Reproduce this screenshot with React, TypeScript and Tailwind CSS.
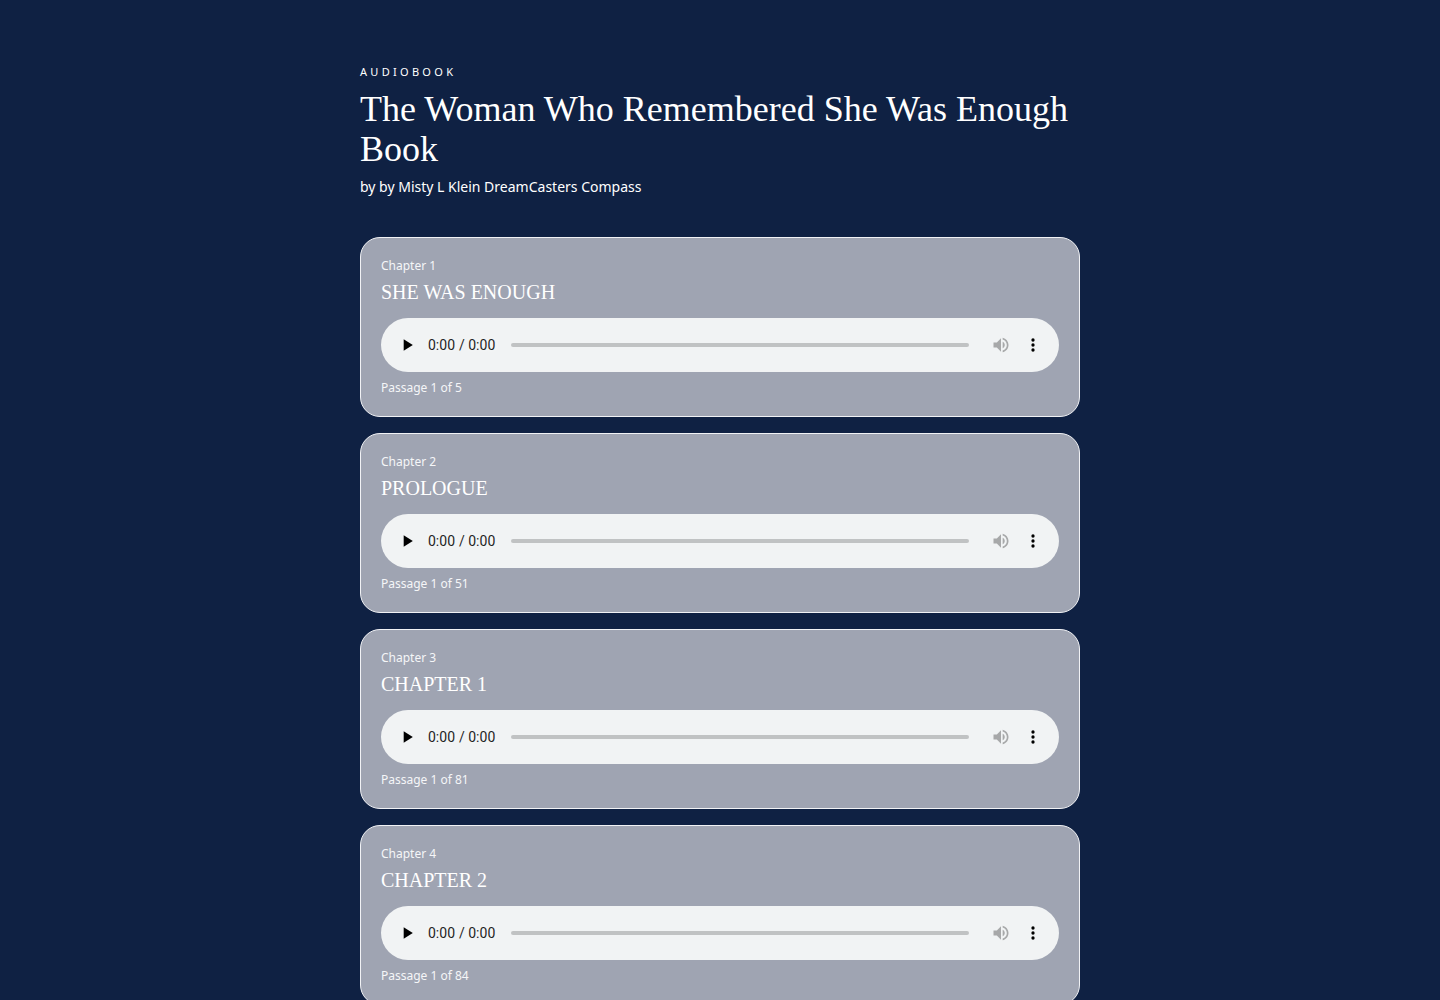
const chapters = [
  { id: 1, title: 'SHE WAS ENOUGH', passages: 5 },
  { id: 2, title: 'PROLOGUE', passages: 51 },
  { id: 3, title: 'CHAPTER 1', passages: 81 },
  { id: 4, title: 'CHAPTER 2', passages: 84 },
  { id: 5, title: 'CHAPTER 3', passages: 72 },
];

export default function App() {
  return (
    <div className="min-h-screen bg-[#0f2143] text-white font-['Noto_Sans',sans-serif]">
      <div className="max-w-[720px] mx-auto pt-16 pb-16">
        <header className="mb-10">
          <p className="text-[11px] tracking-[0.3em] uppercase">Audiobook</p>
          <h1 className="mt-2 text-4xl leading-10 font-normal font-['Liberation_Serif',serif]">
            The Woman Who Remembered She Was Enough Book
          </h1>
          <p className="mt-2 text-sm leading-5">by by Misty L Klein DreamCasters Compass</p>
        </header>

        <div className="flex flex-col gap-4">
          {chapters.map(chapter => (
            <section key={chapter.id} className="bg-[#9fa4b2] border border-[#f1f2f5] rounded-[20px] px-5 pt-5 pb-[21px]">
              <p className="text-xs leading-[15px] text-[#f5f6f8]">Chapter {chapter.id}</p>
              <h2 className="mt-[5px] text-xl leading-7 font-normal font-['Liberation_Serif',serif]">{chapter.title}</h2>
              <audio controls preload="none" src="chapter.mp3" className="w-full mt-3" />
              <p className="mt-2 text-xs leading-[15px] text-[#f5f6f8]">Passage 1 of {chapter.passages}</p>
            </section>
          ))}
        </div>
      </div>
    </div>
  );
}
